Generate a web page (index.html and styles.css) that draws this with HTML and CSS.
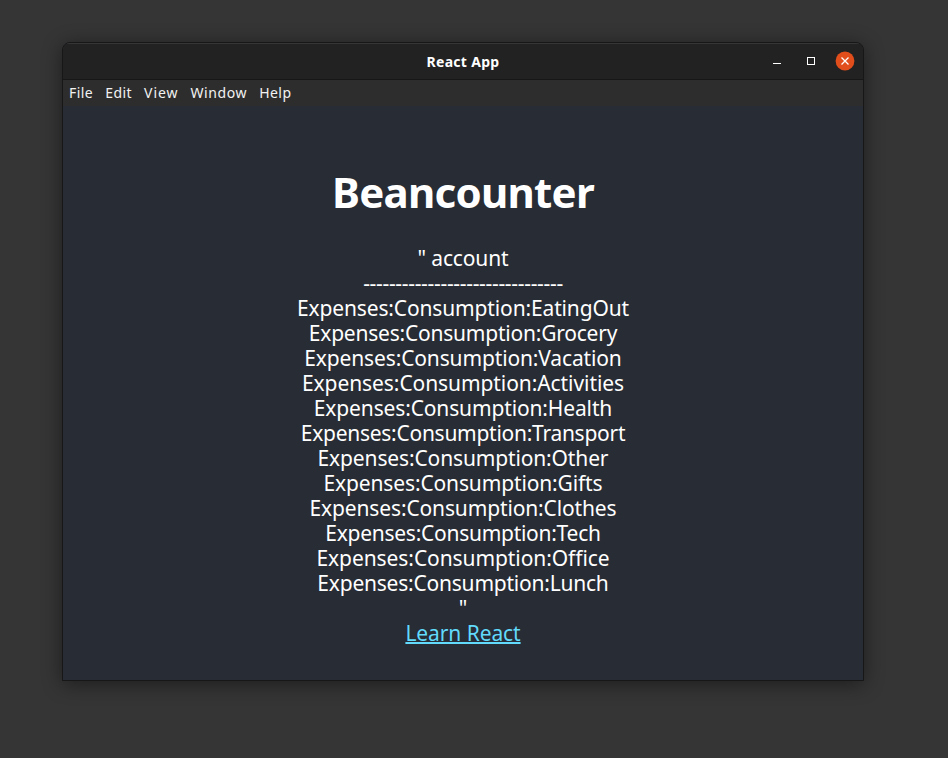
FILE: index.html
```html
<!DOCTYPE html>
<html lang="en">
<head>
<meta charset="utf-8">
<title>React App</title>
<link rel="stylesheet" href="styles.css">
</head>
<body>
<div class="window">
  <header class="titlebar">
    <span class="title">React App</span>
    <div class="controls">
      <svg class="control" viewBox="0 0 20 20"><path d="M6 12.5h8" stroke="#fff" stroke-width="1"/></svg>
      <svg class="control" viewBox="0 0 20 20"><rect x="6.5" y="6.5" width="7" height="7" fill="none" stroke="#fff"/></svg>
      <svg class="control" viewBox="0 0 20 20"><circle cx="10" cy="10" r="9.4" fill="#e24e1b"/><path d="M6.5 6.5l7 7M13.5 6.5l-7 7" stroke="#fff" stroke-width="1.3"/></svg>
    </div>
  </header>
  <nav class="menu"><span>File</span><span>Edit</span><span class="view">View</span><span class="wide">Window</span><span>Help</span></nav>
  <main class="app">
    <h1>Beancounter</h1>
    <div class="output">
      <div>" account</div>
      <div class="rule">-------------------------------</div>
      <div>Expenses:Consumption:EatingOut</div>
      <div class="snug">Expenses:Consumption:Grocery</div>
      <div>Expenses:Consumption:Vacation</div>
      <div class="loose">Expenses:Consumption:Activities</div>
      <div>Expenses:Consumption:Health</div>
      <div class="tight">Expenses:Consumption:Transport</div>
      <div>Expenses:Consumption:Other</div>
      <div>Expenses:Consumption:Gifts</div>
      <div>Expenses:Consumption:Clothes</div>
      <div class="tight">Expenses:Consumption:Tech</div>
      <div class="loose">Expenses:Consumption:Office</div>
      <div class="snug">Expenses:Consumption:Lunch</div>
      <div>"</div>
    </div>
    <a class="link" href="#">Learn React</a>
  </main>
</div>
</body>
</html>
```

FILE: styles.css
```css
* { box-sizing: border-box; }
body { margin: 0; height: 758px; padding: 42px 0 0 62px; background: #353535; font-family: "Noto Sans", sans-serif; color: #fff; overflow: hidden; }
.window { width: 802px; height: 639px; border: 1px solid #171717; border-radius: 8px 8px 0 0; background: #282c34; overflow: hidden; box-shadow: 0 3px 20px rgba(0,0,0,.45); }
.titlebar { height: 37px; display: grid; grid-template-columns: 1fr; align-items: center; background: #222; border-top: 1px solid #363636; border-bottom: 1px solid #171717; }
.title, .controls { grid-area: 1 / 1; }
.title { text-align: center; font-size: 14px; font-weight: 700; line-height: 20px; letter-spacing: .3px; }
.controls { align-self: start; justify-self: end; display: flex; gap: 14px; padding: 7px 8px 0 0; }
.control { width: 20px; height: 20px; }
.menu { height: 26px; display: flex; gap: 12px; padding-left: 6px; background: #2d2d2d; color: #f2f2f2; font-size: 14px; line-height: 26px; letter-spacing: .45px; }
.view { letter-spacing: .95px; }
.wide { letter-spacing: .6px; }
.app { display: flex; flex-direction: column; align-items: center; padding-top: 61px; font-size: 21px; line-height: 25px; text-align: center; }
h1 { margin: 0 0 29px; font-size: 42px; line-height: 50px; letter-spacing: -.75px; }
.output div { height: 25px; white-space: pre; letter-spacing: -.14px; }
.output .loose { letter-spacing: -.08px; }
.output .snug { letter-spacing: -.22px; }
.output .tight { letter-spacing: -.27px; }
.output .rule { letter-spacing: -.32px; line-height: 24px; }
.link { color: #61dafb; letter-spacing: -.08px; text-decoration-thickness: 2px; }
```
